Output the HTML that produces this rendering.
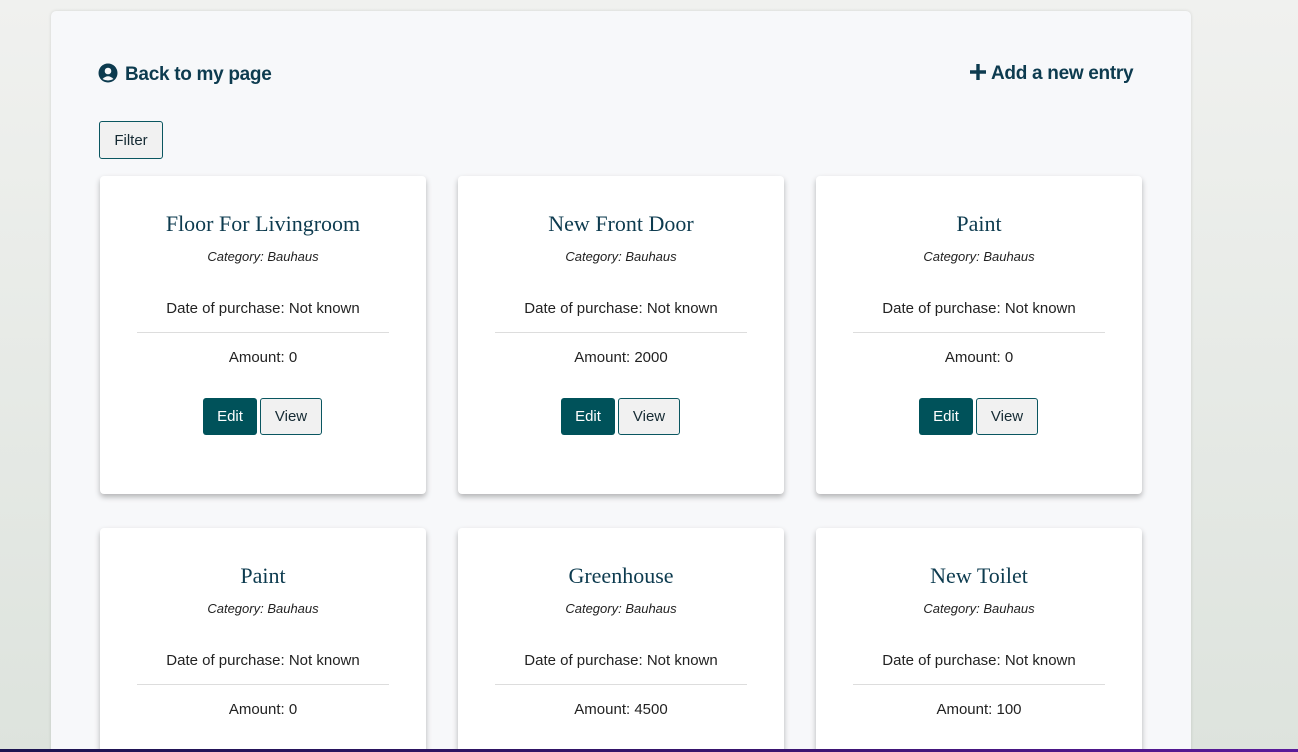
<!DOCTYPE html>
<html style="height:752px;overflow:hidden"><head><style>
*{box-sizing:border-box;margin:0;padding:0}
body{width:1298px;height:752px;overflow:hidden;font-family:"Liberation Sans",sans-serif;color:#0e3547}
.root{position:relative;width:1298px;height:752px;overflow:hidden;background:linear-gradient(#f0f1ef,#dde3dd)}
.wrap{position:absolute;left:51px;top:11px;width:1140px;height:760px;background:#f7f8fa;border-radius:5px;box-shadow:0 0 3px rgba(0,0,0,.12)}
.nav{position:absolute;top:63px;font-size:19px;font-weight:bold;color:#0d3b4f;letter-spacing:-0.3px}
.filter{position:absolute;left:99px;top:121px;width:64px;height:38px;border:1px solid #0a5660;border-radius:3px;background:#f1f1f1;font-size:15px;text-align:center;line-height:38px;color:#152a33}
.card{position:absolute;width:326px;height:318px;background:#fff;border-radius:4px;box-shadow:0 3px 6px rgba(0,0,0,.28);text-align:center}
.t{position:absolute;top:35px;width:100%;font-family:"Liberation Serif",serif;font-size:22px;color:#0d3b4f}
.c{position:absolute;top:73px;width:100%;font-size:13px;font-style:italic;color:#222}
.d{position:absolute;top:124px;width:100%;font-size:15px;color:#222}
.hr{position:absolute;top:156px;left:37px;right:37px;border-top:1px solid #ddd}
.a{position:absolute;top:173px;width:100%;font-size:15px;color:#222}
.b{position:absolute;top:222px;height:37px;border-radius:3px;font-size:15px;line-height:37px;text-align:center}
.e{left:103px;width:54px;background:#00525a;color:#fff}
.v{left:160px;width:62px;background:#f1f1f1;border:1px solid #0a5660;line-height:35px;color:#152a33}
.bar{position:absolute;left:0;right:0;top:749px;height:3px;background:linear-gradient(90deg,#1b1450,#3a1470 60%,#5a1a9a)}
</style></head><body><div class="root">
<div class="wrap"></div>
<div class="nav" style="left:98px"><svg width="20" height="20" viewBox="0 0 20 20" style="vertical-align:-3px;margin-right:7px"><circle cx="10" cy="10" r="9.5" fill="#0d3b4f"/><circle cx="10" cy="8" r="3.3" fill="#f7f8fa"/><path d="M4.5 16 Q10 10.5 15.5 16 Q10 19 4.5 16Z" fill="#f7f8fa"/></svg>Back to my page</div>
<div class="nav" style="left:969px"><svg width="18" height="18" viewBox="0 0 18 18" style="vertical-align:-2px;margin-right:4px"><path d="M9 1v16M1 9h16" stroke="#0d3b4f" stroke-width="3.4"/></svg>Add a new entry</div>
<div class="filter">Filter</div>

<div class="card" style="left:100px;top:176px"><div class="t">Floor For Livingroom</div><div class="c">Category: Bauhaus</div><div class="d">Date of purchase: Not known</div><div class="hr"></div><div class="a">Amount: 0</div><div class="b e">Edit</div><div class="b v">View</div></div>
<div class="card" style="left:458px;top:176px"><div class="t">New Front Door</div><div class="c">Category: Bauhaus</div><div class="d">Date of purchase: Not known</div><div class="hr"></div><div class="a">Amount: 2000</div><div class="b e">Edit</div><div class="b v">View</div></div>
<div class="card" style="left:816px;top:176px"><div class="t">Paint</div><div class="c">Category: Bauhaus</div><div class="d">Date of purchase: Not known</div><div class="hr"></div><div class="a">Amount: 0</div><div class="b e">Edit</div><div class="b v">View</div></div>
<div class="card" style="left:100px;top:528px"><div class="t">Paint</div><div class="c">Category: Bauhaus</div><div class="d">Date of purchase: Not known</div><div class="hr"></div><div class="a">Amount: 0</div><div class="b e">Edit</div><div class="b v">View</div></div>
<div class="card" style="left:458px;top:528px"><div class="t">Greenhouse</div><div class="c">Category: Bauhaus</div><div class="d">Date of purchase: Not known</div><div class="hr"></div><div class="a">Amount: 4500</div><div class="b e">Edit</div><div class="b v">View</div></div>
<div class="card" style="left:816px;top:528px"><div class="t">New Toilet</div><div class="c">Category: Bauhaus</div><div class="d">Date of purchase: Not known</div><div class="hr"></div><div class="a">Amount: 100</div><div class="b e">Edit</div><div class="b v">View</div></div>
<div class="bar"></div>
</div></body></html>
